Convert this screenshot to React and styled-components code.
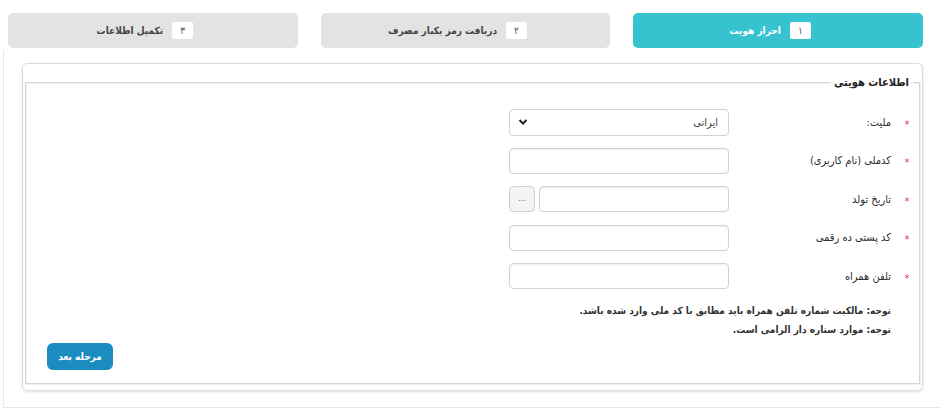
import React from 'react';
import styled, { createGlobalStyle } from 'styled-components';

const GlobalStyle = createGlobalStyle`
	body {
		margin: 0;
		background: #fff;
		font-family: 'DejaVu Sans Condensed', 'DejaVu Sans', sans-serif;
		color: #333;
		overflow: hidden;
	}
`;

const Page = styled.div`
	width: 940px;
	height: 410px;
`;

const Steps = styled.div`
	display: flex;
	direction: rtl;
	gap: 23px;
	padding: 13px 17px 0 8px;
	height: 35px;
`;

const Step = styled.div`
	flex: 1;
	display: flex;
	align-items: center;
	justify-content: center;
	gap: 9px;
	padding-right: 16px;
	border-radius: 5px;
	background: ${(p) => (p.active ? '#36c3cf' : '#e3e3e3')};
	color: ${(p) => (p.active ? '#fff' : '#444')};
	font-size: 10px;
	font-weight: bold;
`;

const StepNum = styled.span`
	display: inline-flex;
	align-items: center;
	justify-content: center;
	width: 21px;
	height: 17px;
	background: #fff;
	border-radius: 2px;
	color: #555;
	font-size: 10px;
	font-weight: normal;
`;

const Panel = styled.div`
	margin: 2px 0 0 3px;
	padding: 13px 17px 16px 18px;
	border-left: 1px solid #e8e8e8;
	border-bottom: 1px solid #e8e8e8;
`;

const Card = styled.div`
	display: flex;
	flex-direction: column;
	height: 328px;
	box-sizing: border-box;
	padding: 12px 2px 6px 2px;
	border: 1px solid #dcdcdc;
	border-radius: 5px;
	box-shadow: 0 1px 3px rgba(0, 0, 0, 0.12);
`;

const Fieldset = styled.fieldset`
	flex: 1;
	direction: rtl;
	margin: 0;
	padding: 0 4px 0 0;
	border: 1px solid #d6d6d6;
	box-shadow: inset 1px 1px 0 #f0f0f0, 1px 1px 0 #f0f0f0;
	display: flex;
	flex-direction: column;
`;

const Legend = styled.legend`
	margin-right: 2px;
	padding: 0 4px;
	font-size: 11px;
	font-weight: bold;
	color: #222;
`;

const Rows = styled.div`
	display: flex;
	flex-direction: column;
	gap: 12.5px;
	padding-top: 20px;
`;

const Row = styled.div`
	display: flex;
	align-items: center;
	height: 26px;
`;

const Star = styled.span`
	width: 16px;
	text-align: center;
	color: #e0314b;
	font-size: 10px;
	padding-top: 4px;
`;

const Label = styled.label`
	width: 162px;
	margin-right: 8px;
	font-size: 11px;
	color: #2e2e2e;
`;

const Field = styled.div`
	display: flex;
	gap: 4px;
	width: 220px;
	height: 26px;
	position: relative;
`;

const Input = styled.input`
	flex: 1;
	min-width: 0;
	height: 26px;
	box-sizing: border-box;
	border: 1px solid #d2d2d2;
	border-radius: 4px;
	box-shadow: inset 0 1px 2px rgba(0, 0, 0, 0.07);
	background: #fff;
	font-family: inherit;
	font-size: 11px;
	padding: 0 8px;
	outline: none;
`;

const Select = styled.select`
	width: 100%;
	height: 27px;
	box-sizing: border-box;
	appearance: none;
	border: 1px solid #d2d2d2;
	border-radius: 4px;
	background: #fff;
	font-family: inherit;
	font-size: 11px;
	color: #444;
	padding: 0 10px;
	direction: rtl;
	outline: none;
`;

const Chevron = styled.svg`
	position: absolute;
	left: 9px;
	top: 9px;
	pointer-events: none;
`;

const DotsButton = styled.button`
	width: 26px;
	height: 26px;
	box-sizing: border-box;
	border: 1px solid #d2d2d2;
	border-radius: 4px;
	background: #f4f4f4;
	color: #666;
	font-size: 9px;
	padding: 0 0 3px;
	font-family: inherit;
`;

const Notes = styled.div`
	margin: 12px 24px 0 0;
	font-size: 10px;
	font-weight: bold;
	line-height: 19px;
	color: #333;
`;

const Footer = styled.div`
	display: flex;
	direction: ltr;
	padding: 4px 0 0 21px;
`;

const NextButton = styled.button`
	width: 66px;
	height: 27px;
	border: none;
	border-radius: 6px;
	background: #1b8cbf;
	color: #fff;
	font-family: inherit;
	font-size: 10px;
	font-weight: bold;
	padding: 0;
`;

const steps = [
	{ num: '۱', title: 'احراز هویت', active: true },
	{ num: '۲', title: 'دریافت رمز یکبار مصرف' },
	{ num: '۳', title: 'تکمیل اطلاعات' }
];

const App = () => (
	<Page>
		<GlobalStyle />
		<Steps>
			{steps.map((s) => (
				<Step key={s.num} active={s.active}>
					<StepNum>{s.num}</StepNum>
					<span>{s.title}</span>
				</Step>
			))}
		</Steps>
		<Panel>
			<Card>
				<Fieldset>
					<Legend>اطلاعات هویتی</Legend>
					<Rows>
						<Row>
							<Star>*</Star>
							<Label>ملیت:</Label>
							<Field>
								<Select defaultValue="ir">
									<option value="ir">ایرانی</option>
								</Select>
								<Chevron width="10" height="8" viewBox="0 0 10 8">
									<path d="M1.5 2 L5 5.5 L8.5 2" fill="none" stroke="#222" strokeWidth="2" />
								</Chevron>
							</Field>
						</Row>
						<Row>
							<Star>*</Star>
							<Label>کدملی (نام کاربری)</Label>
							<Field>
								<Input />
							</Field>
						</Row>
						<Row>
							<Star>*</Star>
							<Label>تاریخ تولد</Label>
							<Field>
								<Input />
								<DotsButton>...</DotsButton>
							</Field>
						</Row>
						<Row>
							<Star>*</Star>
							<Label>کد پستی ده رقمی</Label>
							<Field>
								<Input />
							</Field>
						</Row>
						<Row>
							<Star>*</Star>
							<Label>تلفن همراه</Label>
							<Field>
								<Input />
							</Field>
						</Row>
					</Rows>
					<Notes>
						<div>توجه: مالکیت شماره تلفن همراه باید مطابق با کد ملی وارد شده باشد.</div>
						<div>توجه: موارد ستاره دار الزامی است.</div>
					</Notes>
					<Footer>
						<NextButton>مرحله بعد</NextButton>
					</Footer>
				</Fieldset>
			</Card>
		</Panel>
	</Page>
);

export default App;
